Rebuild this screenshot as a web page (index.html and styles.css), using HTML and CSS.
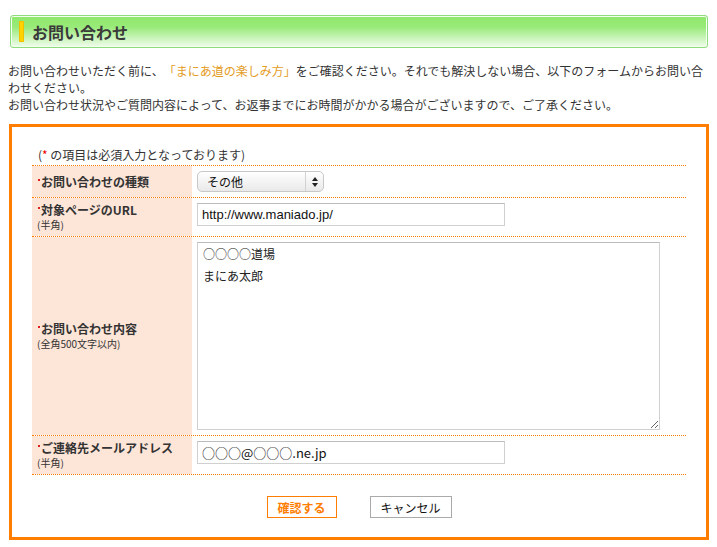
FILE: index.html
```html
<!DOCTYPE html>
<html lang="ja">
<head>
<meta charset="utf-8">
<title>お問い合わせ</title>
<link rel="stylesheet" href="styles.css">
</head>
<body>
<h1 class="title"><span class="title-bar"></span>お問い合わせ</h1>
<p class="intro">お問い合わせいただく前に、<a class="intro-link" href="#">「まにあ道の楽しみ方」</a>をご確認ください。それでも解決しない場合、以下のフォームからお問い合わせください。<br>お問い合わせ状況やご質問内容によって、お返事までにお時間がかかる場合がございますので、ご了承ください。</p>
<div class="formbox">
  <p class="note">(<span class="req">*</span> の項目は必須入力となっております)</p>
  <div class="ftable">
    <div class="frow">
      <div class="flabel"><span class="lt"><span class="dot"></span>お問い合わせの種類</span></div>
      <div class="fval">
        <div class="sel"><span class="sel-text">その他</span><span class="sel-arrow"><svg width="6" height="10" viewBox="0 0 6 10"><path d="M3 0 L6 4 L0 4 Z M0 6 L6 6 L3 10 Z" fill="#222"/></svg></span></div>
      </div>
    </div>
    <div class="frow">
      <div class="flabel"><span class="lt"><span class="dot"></span>対象ページのURL</span><span class="ls">(半角)</span></div>
      <div class="fval fval-input"><input class="inp" type="text" value="http://www.maniado.jp/"></div>
    </div>
    <div class="frow">
      <div class="flabel"><span class="lt"><span class="dot"></span>お問い合わせ内容</span><span class="ls">(全角500文字以内)</span></div>
      <div class="fval"><textarea class="ta">○○○○道場
まにあ太郎</textarea></div>
    </div>
    <div class="frow">
      <div class="flabel"><span class="lt"><span class="dot"></span>ご連絡先メールアドレス</span><span class="ls">(半角)</span></div>
      <div class="fval fval-input"><input class="inp inp-jp" type="text" value="○○○@○○○.ne.jp"></div>
    </div>
  </div>
  <div class="btns">
    <button class="btn btn-ok" type="button">確認する</button>
    <button class="btn btn-cancel" type="button">キャンセル</button>
  </div>
</div>
</body>
</html>
```
FILE: styles.css
```css
body {
  margin: 0;
  font-family: "Noto Sans CJK JP", sans-serif;
  font-size: 12px;
  color: #333;
  background: #fff;
  text-spacing-trim: space-all;
}
.title {
  margin: 15px 0 0 10px;
  width: 698px;
  height: 33px;
  box-sizing: border-box;
  border: 1px solid #8cdc7c;
  border-radius: 3px;
  box-shadow: inset 0 0 0 1px #f4fff0;
  background: linear-gradient(#8fe86c 0%, #98ea78 35%, #c8f4b8 70%, #f0fcec 100%);
  display: flex;
  align-items: center;
  padding-left: 8px;
  gap: 8px;
  font-size: 16px;
  font-weight: bold;
  color: #3a3a3a;
}
.title-bar {
  width: 5px;
  height: 21px;
  background: #ffd200;
  border-radius: 1px;
  box-shadow: inset 0 0 0 1px #f0c000;
}
.intro {
  margin: 14px 0 0 8px;
  width: 700px;
  line-height: 17px;
}
.intro-link {
  color: #e39c1e;
  text-decoration: none;
}
.formbox {
  margin: 11px 0 0 9px;
  width: 700px;
  height: 416px;
  box-sizing: border-box;
  border: 3px solid #ff7d00;
  padding: 19px 20px 0;
}
.note {
  margin: 0 0 2px;
  padding-left: 6px;
  line-height: 17px;
}
.req {
  color: #e00;
}
.ftable {
  border-top: 1px dotted #ff8000;
}
.frow {
  display: flex;
  border-bottom: 1px dotted #ff8000;
}
.flabel {
  width: 160px;
  flex: none;
  box-sizing: border-box;
  background: #fde5d7;
  display: flex;
  flex-direction: column;
  justify-content: center;
  padding-left: 5px;
}
.lt {
  font-weight: bold;
  line-height: 16px;
}
.ls {
  font-size: 10px;
  line-height: 14px;
}
.dot {
  display: inline-block;
  width: 2px;
  height: 2px;
  background: #e02020;
  vertical-align: top;
  margin: 5px 1px 0 1px;
}
.fval {
  flex: 1;
  padding: 5px 5px;
}
.fval-input {
  padding-bottom: 10px;
}
.sel {
  width: 127px;
  height: 21px;
  box-sizing: border-box;
  border: 1px solid #c8c8c8;
  border-radius: 5px;
  background: linear-gradient(#ffffff, #e9e9e9);
  display: flex;
  align-items: stretch;
  color: #111;
}
.sel-text {
  flex: 1;
  padding-left: 9px;
  line-height: 19px;
}
.sel-arrow {
  width: 17px;
  border-left: 1px solid #d2d2d2;
  display: flex;
  align-items: center;
  justify-content: center;
}
.inp {
  display: block;
  width: 308px;
  height: 23px;
  box-sizing: border-box;
  margin: 0;
  border: 1px solid #d0d0d0;
  border-top-color: #bcbcbc;
  padding: 0 4px;
  font-family: "Liberation Sans", "Noto Sans CJK JP", sans-serif;
  font-size: 13px;
  color: #111;
  outline: none;
}
.inp-jp {
  font-family: "Noto Sans CJK JP", sans-serif;
}
.ta {
  display: block;
  width: 463px;
  height: 188px;
  box-sizing: border-box;
  margin: 0;
  border: 1px solid #d0d0d0;
  border-top-color: #bcbcbc;
  padding: 0 5px;
  font-family: "Noto Sans CJK JP", sans-serif;
  font-size: 12px;
  line-height: 22px;
  color: #222;
  outline: none;
}
.btns {
  display: flex;
  justify-content: center;
  gap: 33px;
  margin-top: 21px;
}
.btn {
  height: 22px;
  box-sizing: border-box;
  margin: 0;
  padding: 0;
  background: #fff;
  font-family: "Noto Sans CJK JP", sans-serif;
  font-size: 12px;
}
.btn-ok {
  width: 70px;
  border: 1px solid #ff7d00;
  color: #ff7d00;
  font-weight: bold;
}
.btn-cancel {
  width: 82px;
  border: 1px solid #aaa;
  color: #111;
}
```
